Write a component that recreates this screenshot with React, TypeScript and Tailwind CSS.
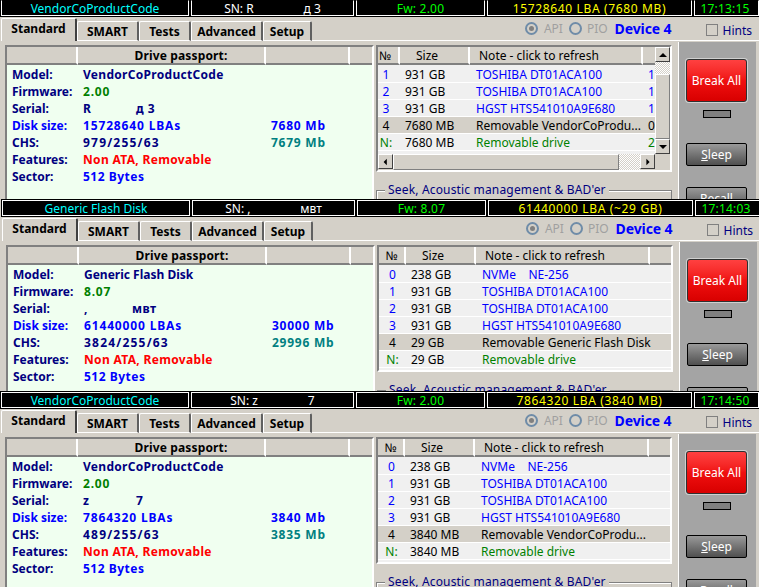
const FONT = "font-['Noto_Sans','DejaVu_Sans',sans-serif]";

type Row = { no: string; size: string; note: string; color: string; tail?: string; active?: boolean };

type Disk = {
  name: string;
  nameTrack: string;
  sn: string;
  fw: string;
  lba: string;
  time: string;
  serial: [string, string];
  serialGap: string;
  lbas: string;
  mb: string;
  chs: string;
  chsMb: string;
  rows: Row[];
  scroll?: boolean;
  height: string;
  shift?: string;
};

const BLUE = "text-[#0000ff]";
const GREEN = "text-[#008000]";

function makeRows(size: string, name: string): Row[] {
  return [
    { no: "0", size: "238 GB", note: "NVMe    NE-256", color: BLUE },
    { no: "1", size: "931 GB", note: "TOSHIBA DT01ACA100", color: BLUE },
    { no: "2", size: "931 GB", note: "TOSHIBA DT01ACA100", color: BLUE },
    { no: "3", size: "931 GB", note: "HGST HTS541010A9E680", color: BLUE },
    { no: "4", size, note: "Removable " + name, color: "text-black", active: true },
    { no: "N:", size, note: "Removable drive", color: GREEN },
  ];
}

const disks: Disk[] = [
  {
    name: "VendorCoProductCode",
    nameTrack: "tracking-[0.3px]",
    sn: "SN: R                д 3",
    fw: "Fw: 2.00",
    lba: "15728640 LBA (7680 MB)",
    time: "17:13:15",
    serial: ["R", "д 3"],
    serialGap: "w-[45px]",
    lbas: "15728640 LBAs",
    mb: "7680 Mb",
    chs: "979/255/63",
    chsMb: "7679 Mb",
    scroll: true,
    height: "h-[200px] -mt-px",
    rows: [
      { no: "1", size: "931 GB", note: "TOSHIBA DT01ACA100", color: BLUE, tail: "1" },
      { no: "2", size: "931 GB", note: "TOSHIBA DT01ACA100", color: BLUE, tail: "1" },
      { no: "3", size: "931 GB", note: "HGST HTS541010A9E680", color: BLUE, tail: "1" },
      { no: "4", size: "7680 MB", note: "Removable VendorCoProdu...", color: "text-black", tail: "0", active: true },
      { no: "N:", size: "7680 MB", note: "Removable drive", color: GREEN, tail: "2" },
    ],
  },
  {
    name: "Generic Flash Disk",
    nameTrack: "tracking-normal",
    sn: "SN: ,                мвт",
    fw: "Fw: 8.07",
    lba: "61440000 LBA (~29 GB)",
    time: "17:14:03",
    serial: [",", "мвт"],
    serialGap: "w-[40px]",
    lbas: "61440000 LBAs",
    mb: "30000 Mb",
    chs: "3824/255/63",
    chsMb: "29996 Mb",
    height: "h-[192px]",
    shift: "ml-px",
    rows: makeRows("29 GB", "Generic Flash Disk"),
  },
  {
    name: "VendorCoProductCode",
    nameTrack: "tracking-[0.3px]",
    sn: "SN: z                7",
    fw: "Fw: 2.00",
    lba: "7864320 LBA (3840 MB)",
    time: "17:14:50",
    serial: ["z", "7"],
    serialGap: "w-[45px]",
    lbas: "7864320 LBAs",
    mb: "3840 Mb",
    chs: "489/255/63",
    chsMb: "3835 Mb",
    height: "h-[196px]",
    rows: makeRows("3840 MB", "VendorCoProdu..."),
  },
];

const tabs = [
  { label: "SMART", w: "w-[62px]" },
  { label: "Tests", w: "w-[52px]" },
  { label: "Advanced", w: "w-[72px]" },
  { label: "Setup", w: "w-[49px]" },
];

function HeadCell({ w, children, last }: { w: string; children?: React.ReactNode; last?: boolean }) {
  return (
    <div
      className={`${w} shrink-0 h-full flex items-center justify-center border-b-2 border-b-[#808080] ${
        last ? "" : "border-r-2 border-r-white"
      }`}
    >
      {children}
    </div>
  );
}

function Arrow({ dir }: { dir: "up" | "down" | "left" | "right" }) {
  const pts = {
    up: "1,6 9,6 5,2",
    down: "1,2 9,2 5,6",
    left: "6,1 6,9 2,5",
    right: "3,1 3,9 7,5",
  }[dir];
  const box = dir === "up" || dir === "down" ? "0 0 10 8" : "0 0 10 10";
  return (
    <svg viewBox={box} className="w-[10px] h-[8px]">
      <polygon points={pts} fill="#000" />
    </svg>
  );
}

function ScrollBtn({ dir }: { dir: "up" | "down" | "left" | "right" }) {
  return (
    <div className="w-[15px] h-[15px] shrink-0 flex items-center justify-center bg-[#d4d0c8] border border-t-white border-l-white border-r-[#404040] border-b-[#404040]">
      <Arrow dir={dir} />
    </div>
  );
}

const DITHER = "bg-[repeating-conic-gradient(#ffffff_0_25%,#d4d0c8_0_50%)] bg-[length:2px_2px]";

function DriveList({ disk }: { disk: Disk }) {
  const scroll = disk.scroll;
  const noW = scroll ? "w-[22px]" : "w-[27px]";
  const noPad = scroll ? "pr-[6px]" : "";
  const sizeW = "w-[70px]";
  const noteW = scroll ? "w-[173px]" : "w-[174px]";
  return (
    <div className="relative w-[296px] h-[127px] border-2 border-t-[#808080] border-l-[#808080] border-r-white border-b-white bg-[#f0f0f0] overflow-hidden">
      <div className="h-[18px] flex bg-[#d4d0c8] text-black">
        <HeadCell w={noW}>
          <span className={noPad}>№</span>
        </HeadCell>
        <HeadCell w={sizeW}>
          <span className="pr-[14px]">Size</span>
        </HeadCell>
        <HeadCell w={noteW}>
          <span className="w-full pl-[9px] text-left">Note - click to refresh</span>
        </HeadCell>
        <HeadCell w="flex-1" last />
      </div>
      <div className="mt-px">
        {disk.rows.map((r) => (
          <div key={r.no} className={`h-[17px] flex items-center border-b border-b-white ${r.active ? "bg-[#d4d0c8]" : ""}`}>
            <div className={`${noW} ${noPad} shrink-0 text-center ${r.no === "N:" ? GREEN : r.active ? "text-black" : BLUE}`}>{r.no}</div>
            <div className={`${sizeW} shrink-0 pl-[5px] text-black`}>{r.size}</div>
            <div className={`${noteW} shrink-0 pl-[6px] whitespace-pre ${r.color}`}>{r.note}</div>
            <div className={`flex-1 pl-[5px] ${r.color}`}>{r.tail}</div>
          </div>
        ))}
      </div>
      {scroll && (
        <>
          <div className="absolute right-0 top-0 bottom-[16px] w-[15px] flex flex-col bg-[#d4d0c8]">
            <ScrollBtn dir="up" />
            <div className={`h-[12px] ${DITHER}`} />
            <div className="flex-1 border border-t-white border-l-white border-r-[#808080] border-b-[#808080]" />
            <ScrollBtn dir="down" />
          </div>
          <div className="absolute left-0 right-0 bottom-0 h-[16px] flex bg-[#d4d0c8]">
            <ScrollBtn dir="left" />
            <div className="w-[226px] border border-t-white border-l-white border-r-[#808080] border-b-[#808080]" />
            <div className={`flex-1 ${DITHER}`} />
            <ScrollBtn dir="right" />
            <div className="w-[15px]" />
          </div>
        </>
      )}
    </div>
  );
}

function Passport({ disk }: { disk: Disk }) {
  const navy = "text-[#000080]";
  const rows: { label: string; lc: string; value: React.ReactNode; vc: string; extra?: string; ec?: string }[] = [
    { label: "Model:", lc: navy, value: disk.name, vc: `${navy} ${disk.nameTrack}` },
    { label: "Firmware:", lc: navy, value: disk.fw.replace("Fw: ", ""), vc: `${GREEN} tracking-[0.8px]` },
    {
      label: "Serial:",
      lc: navy,
      value: (
        <span className="flex">
          <span className={disk.serialGap}>{disk.serial[0]}</span>
          <span className="ml-[8px]">{disk.serial[1]}</span>
        </span>
      ),
      vc: `${navy} tracking-[0.5px]`,
    },
    { label: "Disk size:", lc: BLUE, value: disk.lbas, vc: `${BLUE} tracking-[0.85px]`, extra: disk.mb, ec: `${BLUE} tracking-[0.75px]` },
    { label: "CHS:", lc: navy, value: disk.chs, vc: `${navy} tracking-[1.2px]`, extra: disk.chsMb, ec: "text-[#008080] tracking-[0.75px]" },
    { label: "Features:", lc: navy, value: "Non ATA, Removable", vc: "text-[#ff0000] tracking-[0.33px]" },
    { label: "Sector:", lc: navy, value: "512 Bytes", vc: `${BLUE} tracking-[0.5px]` },
  ];
  return (
    <div className="w-[369px] h-[200px] shrink-0 border-2 border-b-0 border-t-[#808080] border-l-[#808080] border-r-white bg-[#f0fff0] font-bold">
      <div className="h-[18px] flex bg-[#d4d0c8] text-black">
        <HeadCell w="w-[71px]" />
        <HeadCell w="w-[188px]">
          <span className="pl-[20px] tracking-[0.15px]">Drive passport:</span>
        </HeadCell>
        <HeadCell w="w-[84px]" />
        <HeadCell w="flex-1" last />
      </div>
      <div className="pt-px">
        {rows.map((r) => (
          <div key={r.label} className="h-[17px] flex items-center">
            <div className={`w-[76px] shrink-0 pl-[5px] ${r.lc}`}>{r.label}</div>
            <div className={`w-[188px] shrink-0 ${r.vc}`}>{r.value}</div>
            {r.extra && <div className={r.ec}>{r.extra}</div>}
          </div>
        ))}
      </div>
    </div>
  );
}

function Panel({ disk, first }: { disk: Disk; first: boolean }) {
  const cell = `h-full flex items-center justify-center pt-[2px] bg-black border border-white ${first ? "border-t-black" : ""}`;
  return (
    <div className={`${disk.height} overflow-hidden`}>
      <div className={`${disk.shift ?? ""} w-[760px]`}>
        {/* top status bar */}
        <div className="h-[18px] flex gap-[2px] px-px py-px bg-black text-[12px] leading-none">
          <div className={`${cell} w-[188px] text-[#00ffff]`}>{disk.name}</div>
          <div className={`${cell} w-[163px] text-white whitespace-pre`}>{disk.sn}</div>
          <div className={`${cell} w-[129px] text-[#00ff00] tracking-[0.2px]`}>{disk.fw}</div>
          <div className={`${cell} w-[205px] text-[#ffff00] tracking-[0.65px]`}>{disk.lba}</div>
          <div className={`${cell} flex-1 pr-[3px] text-[#00ff00] tracking-[0.2px]`}>{disk.time}</div>
        </div>

        <div className="bg-[#d4d0c8] h-[200px]">
          {/* tabs + mode row */}
          <div className="h-[24px] flex items-end">
            <div className="flex items-end pl-px font-bold text-black">
              <div className="w-[76px] h-[23px] pb-[3px] flex items-center justify-center rounded-t-[2px] border-l border-t border-white border-r-2 border-r-[#404040]">
                Standard
              </div>
              {tabs.map((t) => (
                <div
                  key={t.label}
                  className={`${t.w} h-[20px] flex items-center justify-center rounded-t-[2px] border-l border-t border-white border-r-2 border-r-[#606060] border-b border-b-white`}
                >
                  {t.label}
                </div>
              ))}
            </div>
            <div className="flex-1 h-full flex items-center justify-end pb-[1px] border-b border-b-white">
              <span className="w-[13px] h-[13px] rounded-full border-2 border-[#6f8ca8] flex items-center justify-center mr-[6px]">
                <span className="w-[5px] h-[5px] rounded-full bg-[#808080]" />
              </span>
              <span className="text-[#a0a0a0] mr-[6px]">API</span>
              <span className="w-[13px] h-[13px] rounded-full border-2 border-[#6f8ca8] mr-[5px]" />
              <span className="text-[#a0a0a0] mr-[7px]">PIO</span>
              <span className="text-[#0000ff] font-bold text-[14px] mr-[34px] tracking-[-0.1px]">Device 4</span>
              <span className="w-[12px] h-[12px] border border-[#808080] mr-[5px] mt-[3px]" />
              <span className="text-[#000080] mr-[8px] mt-[4px]">Hints</span>
            </div>
          </div>

          <div className="flex">
            <div className="w-[678px] shrink-0 flex gap-[2px] pl-[5px] pt-[4px]">
              <Passport disk={disk} />
              <div className="flex flex-col">
                <DriveList disk={disk} />
                <div className="mt-[18px] h-[40px] border border-b-0 border-[#808080] shadow-[inset_1px_1px_0_#ffffff]">
                  <div className="-mt-[9px] ml-[8px] w-fit px-[3px] bg-[#d4d0c8] text-[#000080] leading-[16px] tracking-[0.17px]">
                    Seek, Acoustic management &amp; BAD'er
                  </div>
                </div>
              </div>
            </div>

            {/* side buttons */}
            <div className="w-[78px] shrink-0 mt-px h-[160px] bg-[#a4a4a4] border-l border-white pl-[7px] pt-[17px]">
              <div className="w-[61px] h-[43px] flex items-center justify-center border border-[#303030] rounded-[3px] ring-1 ring-[#d0d0d0] bg-gradient-to-b from-[#ff4040] via-[#f01010] to-[#d80000] text-white">
                Break All
              </div>
              <div className="ml-[17px] mt-[8px] w-[28px] h-[8px] bg-[#808080] border border-black" />
              <div className="mt-[25px] w-[61px] h-[23px] flex items-center justify-center border border-black rounded-[2px] bg-gradient-to-b from-[#9a9a9a] to-[#505050] text-white">
                <span className="underline">S</span>leep
              </div>
              <div className="mt-[21px] w-[61px] h-[23px] flex items-center justify-center border border-black rounded-[2px] bg-gradient-to-b from-[#9a9a9a] to-[#505050] text-white">
                Recall
              </div>
            </div>
          </div>
        </div>
      </div>
    </div>
  );
}

export default function App() {
  return (
    <div className={`w-[759px] h-[587px] overflow-hidden bg-[#d4d0c8] text-[12px] leading-[17px] ${FONT}`}>
      {disks.map((d, i) => (
        <Panel key={d.time} disk={d} first={i === 0} />
      ))}
    </div>
  );
}
